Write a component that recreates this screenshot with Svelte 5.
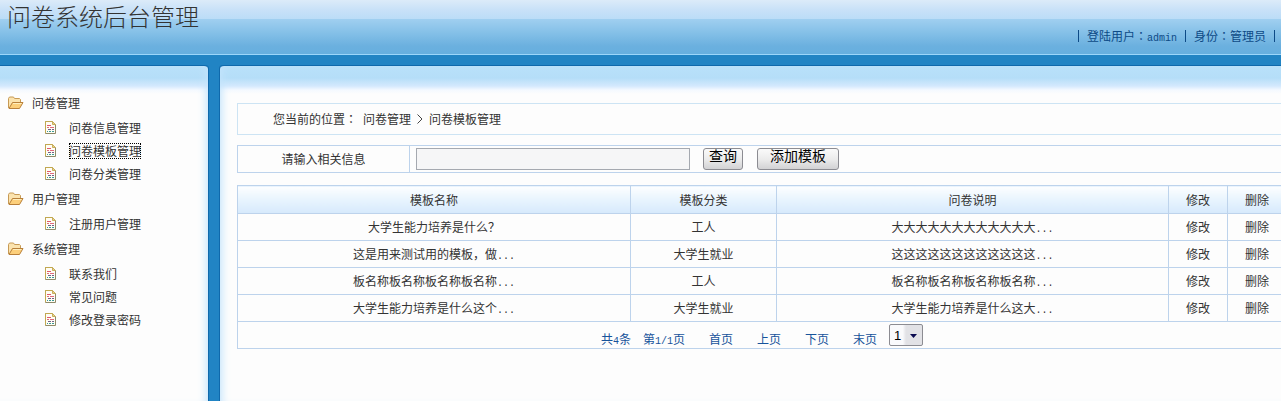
<script>
	const groups = [
		{ title: '问卷管理', items: ['问卷信息管理', '问卷模板管理', '问卷分类管理'] },
		{ title: '用户管理', items: ['注册用户管理'] },
		{ title: '系统管理', items: ['联系我们', '常见问题', '修改登录密码'] }
	];

	const rows = [
		{ name: '大学生能力培养是什么？', tail: '', type: '工人', desc: '大大大大大大大大大大大大' },
		{ name: '这是用来测试用的模板，做', tail: '...', type: '大学生就业', desc: '这这这这这这这这这这这这' },
		{ name: '板名称板名称板名称板名称', tail: '...', type: '工人', desc: '板名称板名称板名称板名称' },
		{ name: '大学生能力培养是什么这个', tail: '...', type: '大学生就业', desc: '大学生能力培养是什么这大' }
	];

	const pages = ['首页', '上页', '下页', '末页'];

	let current = '问卷模板管理';
	let keyword = '';
	let page = '1';
</script>

<div class="layout">
	<header class="top">
		<h1>问卷系统后台管理</h1>
		<p class="user">
			<span class="bar"></span>
			<span>登陆用户<span class="colon">：</span><span class="half">admin</span></span>
			<span class="bar"></span>
			<span>身份<span class="colon">：</span>管理员</span>
			<span class="bar"></span>
		</p>
	</header>

	<div class="body">
		<nav class="side">
			{#each groups as group}
				<h2>
					<svg width="16" height="13" viewBox="0 0 16 13">
						<path d="M.5 12V2.500l1-1.500h4l1 1.500h5l1 1V6" fill="#fbe3ae" stroke="#c79a55" />
						<path d="M1 12.500L4.500 6.500H15L11.500 12.500z" fill="#fccf7b" stroke="#b9803a" stroke-linejoin="round" />
						<path d="M5 7.500h8.500" stroke="#ffeebc" />
					</svg>
					{group.title}
				</h2>
				<ul>
					{#each group.items as item}
						<li>
							<svg width="12" height="15" viewBox="0 0 12 15">
								<path d="M.5 1.500h7l3 3v9H.5z" fill="#fffdf5" stroke="#8f8a68" />
								<path d="M.5 13V1.500h7" fill="none" stroke="#c2a850" />
								<path d="M7.500 1.500v3h3z" fill="#e8d48c" stroke="#c9ae5c" />
								<path d="M2 5.500h4" stroke="#e0566a" />
								<path d="M2 7.500h2M5 7.500h4" stroke="#e06a7c" />
								<path d="M3 9.500h3M7 9.500h2" stroke="#735f86" />
								<path d="M2 11.500h1M4 11.500h2M7 11.500h2" stroke="#3a9a94" />
							</svg>
							<a href="#{item}" class:current={item === current} on:click={() => (current = item)}>{item}</a>
						</li>
					{/each}
				</ul>
			{/each}
		</nav>

		<main>
			<div class="content">
				<div class="crumb">
					<span>您当前的位置<span class="colon">：</span></span>
					<span>问卷管理</span>
					<svg width="6" height="10" viewBox="0 0 6 10"><path d="M.5.5L5 5L.5 9.500" fill="none" stroke="#444" /></svg>
					<span>问卷模板管理</span>
				</div>

				<form class="search" on:submit|preventDefault>
					<label for="keyword">请输入相关信息</label>
					<div class="fields">
						<input id="keyword" type="text" bind:value={keyword} />
						<button type="submit">查询</button>
						<button type="button" class="add">添加模板</button>
					</div>
				</form>

				<table>
					<colgroup>
						<col />
						<col class="col-type" />
						<col class="col-desc" />
						<col class="col-action" />
						<col class="col-action" />
					</colgroup>
					<thead>
						<tr>
							<th>模板名称</th>
							<th>模板分类</th>
							<th>问卷说明</th>
							<th>修改</th>
							<th>删除</th>
						</tr>
					</thead>
					<tbody>
						{#each rows as row}
							<tr>
								<td>{row.name}{#if row.tail}<span class="half">{row.tail}</span>{/if}</td>
								<td>{row.type}</td>
								<td>{row.desc}<span class="half">...</span></td>
								<td><a href="#edit">修改</a></td>
								<td><a href="#delete">删除</a></td>
							</tr>
						{/each}
					</tbody>
					<tfoot>
						<tr>
							<td colspan="5">
								<div class="pager">
									<span class="total">共<span class="half">4</span>条</span>
									<span>第<span class="half">1/1</span>页</span>
									{#each pages as label}
										<a href="#page">{label}</a>
									{/each}
									<span class="picker">
										<select bind:value={page} aria-label="页码">
											<option value="1">1</option>
										</select>
										<svg width="7" height="4" viewBox="0 0 7 4"><path d="M0 0h7L3.500 4z" fill="#0a0a50" /></svg>
									</span>
								</div>
							</td>
						</tr>
					</tfoot>
				</table>
			</div>
		</main>
	</div>
</div>

<style>
	:global(body) {
		background: #fdfdfd;
	}
	.layout {
		display: flex;
		flex-direction: column;
		min-height: 100vh;
		font-family: "Noto Sans CJK SC", sans-serif;
		font-size: 12px;
		line-height: 16px;
		color: #333;
	}
	h1,
	h2,
	p,
	ul {
		margin: 0;
		padding: 0;
		font-weight: normal;
	}
	a {
		color: inherit;
		text-decoration: none;
	}
	.half {
		font-family: "Liberation Mono", monospace;
		font-size: 10px;
		line-height: 0;
	}
	/* the TC face centres the full-width colon */
	.colon {
		font-family: "Noto Sans CJK TC", sans-serif;
		line-height: 0;
	}

	.top {
		display: flex;
		justify-content: space-between;
		height: 54px;
		border-bottom: 1px solid #9bd6fa;
		background: linear-gradient(#dcebf9 0, #c8e1f8 10px, #bbdcf7 19px, #a0cff0 19px, #86c1e8 32px, #6bb0df 46px, #66afdf 54px);
	}
	h1 {
		padding: 0 7px;
		font-size: 24px;
		line-height: 32px;
		font-weight: 300;
	}
	.user {
		display: flex;
		align-items: center;
		gap: 8px;
		height: 16px;
		padding: 28px 6px 0 0;
		color: #0d4a86;
	}
	.bar {
		width: 1px;
		height: 12px;
		background: #0d4a86;
	}

	.body {
		display: flex;
		flex: 1;
		gap: 12px;
		border-top: 10px solid #2184c4;
		background: #2184c4;
	}
	.side,
	main {
		border-top: 1px solid #0f69ac;
		background: linear-gradient(#b9e1fa 0, #b5def8 12px, #d4e9fd 20px, #f4f9ff 24px, #fdfdfd 28px);
	}
	.side {
		box-sizing: border-box;
		width: 208px;
		padding-top: 23px;
		border-radius: 0 4px 0 0;
		box-shadow: 1px 0 #0f69ac, inset -8px 0 8px -6px #c4e4fc;
	}
	main {
		flex: 1;
		min-width: 0;
		overflow: hidden;
		border-radius: 4px 0 0 0;
		box-shadow: -1px 0 #0f69ac, inset 8px 0 8px -6px #c4e4fc;
	}

	h2 {
		display: flex;
		align-items: center;
		gap: 8px;
		height: 27px;
		padding-left: 8px;
		font-size: 12px;
	}
	ul {
		list-style: none;
	}
	li {
		display: flex;
		align-items: center;
		gap: 12px;
		height: 23px;
		padding-left: 45px;
	}
	.current {
		outline: 1px dotted #000;
		outline-offset: -1px;
	}

	/* the content runs a little past the right edge of the window */
	.content {
		display: flex;
		flex-direction: column;
		margin: 37px -6px 0 17px;
	}
	.crumb {
		display: flex;
		align-items: center;
		gap: 6px;
		height: 30px;
		padding-left: 35px;
		margin-bottom: 10px;
		border: 1px solid #cde4f4;
	}
	.search {
		display: flex;
		margin-bottom: 12px;
		border: 1px solid #bdd3ec;
	}
	.search label {
		width: 171px;
		line-height: 26px;
		text-align: center;
		border-right: 1px solid #bdd3ec;
	}
	.fields {
		display: flex;
		align-items: center;
		padding-left: 6px;
	}
	input {
		box-sizing: border-box;
		width: 274px;
		height: 22px;
		margin-right: 13px;
		border: 1px solid #a5a9b0;
		background: #f6f6f7;
	}
	button {
		height: 22px;
		margin-right: 14px;
		padding: 0 5px 8px;
		font-family: inherit;
		font-size: 14px;
		line-height: 12px;
		color: #000;
		border: 1px solid #8c8c92;
		border-radius: 3px;
		background: linear-gradient(#fafafa, #ececec 50%, #d2d2d4);
	}
	.add {
		padding: 0 12px 8px;
	}

	table {
		width: 100%;
		table-layout: fixed;
		border-collapse: collapse;
	}
	.col-type {
		width: 146px;
	}
	.col-desc {
		width: 392px;
	}
	.col-action {
		width: 59px;
	}
	th,
	td {
		height: 26px;
		padding: 0;
		border: 1px solid #bdd3ec;
		text-align: center;
		font-weight: normal;
	}
	th {
		height: 27px;
		background: linear-gradient(#fdfeff, #e8f4fe 50%, #d6e9fc);
	}
	.pager {
		display: flex;
		align-items: flex-end;
		justify-content: center;
		height: 24px;
		color: #17539b;
	}
	.total {
		margin-right: 12px;
	}
	.pager a {
		margin-left: 24px;
	}
	.picker {
		position: relative;
		margin-left: 12px;
		margin-bottom: 1px;
	}
	.picker svg {
		position: absolute;
		right: 6px;
		top: 10px;
		pointer-events: none;
	}
	select {
		display: block;
		appearance: none;
		width: 34px;
		height: 22px;
		padding: 0 4px;
		font-family: "Liberation Sans", sans-serif;
		font-size: 13px;
		color: #000;
		border: 1px solid #8c8c92;
		border-radius: 2px;
		background: linear-gradient(90deg, #fafafc 40%, #e2e2e6 50%);
	}
</style>
